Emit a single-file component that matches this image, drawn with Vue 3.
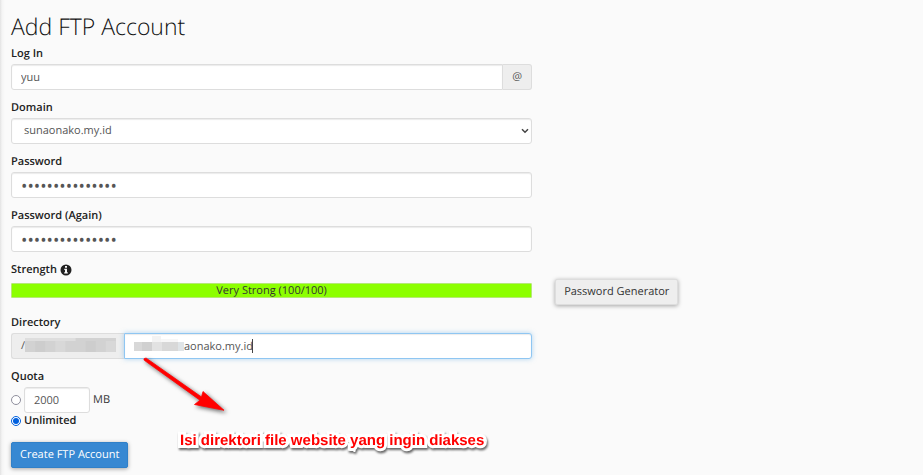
<script setup>
import { ref } from 'vue'

const login = ref('yuu')
const domain = ref('sunaonako.my.id')
const password = ref('passwordsecret1')
const passwordAgain = ref('passwordsecret1')
const directory = ref('aonako.my.id')
const quota = ref('2000')
const quotaType = ref('unlimited')
</script>

<template>
  <main class="page">
    <h1>Add FTP Account</h1>
    <form class="form" @submit.prevent>
      <div class="field">
        <label for="login">Log In</label>
        <div class="group">
          <input id="login" v-model="login" class="control joined-left" type="text" />
          <span class="addon addon-right">@</span>
        </div>
      </div>

      <div class="field">
        <label for="domain">Domain</label>
        <div class="select-wrap">
          <select id="domain" v-model="domain" class="control select">
            <option>sunaonako.my.id</option>
          </select>
          <svg class="chevron" viewBox="0 0 8 6" aria-hidden="true">
            <path d="M1 1.2 4 4.2 7 1.2" fill="none" stroke="#444" stroke-width="1.5" />
          </svg>
        </div>
      </div>

      <div class="field">
        <label for="password">Password</label>
        <input id="password" v-model="password" class="control secret" type="password" />
      </div>

      <div class="field">
        <label for="password-again">Password (Again)</label>
        <input id="password-again" v-model="passwordAgain" class="control secret" type="password" />
      </div>

      <div class="field strength">
        <div class="caption">
          Strength
          <svg class="info" viewBox="0 0 12 12" aria-hidden="true">
            <circle cx="6" cy="6" r="5.5" fill="#222" />
            <path d="M5 2h2v1.7H5zM4.3 4.7H7v3.6h.8v1.2H4.2V8.3H5V5.9h-.7z" fill="#fafafa" />
          </svg>
        </div>
        <div class="meter">Very Strong (100/100)</div>
      </div>
      <button class="btn btn-default" type="button">Password Generator</button>

      <div class="field">
        <label for="directory">Directory</label>
        <div class="group">
          <span class="addon addon-left">/<svg class="mask-prefix" viewBox="0 0 90 15" preserveAspectRatio="none" aria-hidden="true">
            <rect y="1" width="90" height="14" fill="#d2d2d2" />
            <path d="M0 1h50v3H0z" fill="#dedede" />
            <path d="M10 4h10v11H10zM60 4h10v11H60z" fill="#cdcdcd" />
            <path d="M30 4h10v11H30zM80 4h10v11H80z" fill="#d8d8d8" />
          </svg></span>
          <div class="directory">
            <input id="directory" v-model="directory" class="control joined-right focused" type="text" />
            <svg class="mask-name" viewBox="0 0 50 16" preserveAspectRatio="none" aria-hidden="true">
              <path d="M0 6h50v9H0z" fill="#d8d8d8" />
              <path d="M8 6h10v9H8z" fill="#d0d0d0" />
              <path d="M18 6h10v9H18z" fill="#e2e2e2" />
              <path d="M44 6h6v9h-6z" fill="#dfe4e7" />
              <path d="M18 0h9v6h-9z" fill="#f3f3f3" />
              <path d="M27 3h17v3H27z" fill="#f7f7f7" />
            </svg>
            <span class="caret"></span>
            <svg class="arrow" viewBox="0 0 90 66" aria-hidden="true">
              <path d="M6.3 3.2 61.5 42 63 36.5 84 55.3 54.5 49.5 60 45.2 4.3 5.3Q3 3 6.3 3.2Z" fill="#f00" stroke="#f00" stroke-width=".8" />
            </svg>
            <p class="note">Isi direktori file website yang ingin diakses</p>
          </div>
        </div>
      </div>

      <fieldset class="quota">
        <legend>Quota</legend>
        <div class="choice">
          <input v-model="quotaType" class="radio" type="radio" name="quota" value="limited" aria-label="Limited quota" />
          <input v-model="quota" class="control amount" type="text" aria-label="Quota in MB" />
          <span>MB</span>
        </div>
        <label class="choice unlimited">
          <input v-model="quotaType" class="radio" type="radio" name="quota" value="unlimited" />
          Unlimited
        </label>
      </fieldset>

      <button class="btn btn-primary" type="submit">Create FTP Account</button>
    </form>
  </main>
</template>

<style>
body {
  margin: 0;
  background: #fafafa;
}
</style>

<style scoped>
* {
  box-sizing: border-box;
}

.page {
  min-height: 100vh;
  padding: 11px 0 7px 11px;
  overflow: hidden;
  background: linear-gradient(90deg, #e2e2e2 0, #f4f4f4 2px, #fafafa 5px);
  color: #333;
  font: 11px/16px "Open Sans", sans-serif;
  text-rendering: geometricPrecision;
}

h1 {
  margin: 0 0 6px;
  color: #111;
  font-size: 23px;
  line-height: 30px;
  font-weight: 300;
}

.form {
  display: grid;
  grid-template-columns: 17fr 12fr;
  column-gap: 23px;
}

.field,
.quota {
  grid-column: 1;
  min-width: 0;
  margin: 0 0 11px;
}

.field > label,
.caption,
legend {
  display: block;
  height: 17px;
  padding: 0;
  color: #222;
  font-weight: 600;
  line-height: 14px;
}

.control {
  display: block;
  width: 100%;
  height: 26px;
  min-width: 0;
  margin: 0;
  padding: 0 9px;
  border: 1px solid #ddd;
  border-radius: 3px;
  outline: none;
  background: #fff;
  box-shadow: inset 0 1px 1px rgba(0, 0, 0, 0.08);
  color: #555;
  font: inherit;
  text-rendering: inherit;
}

.secret {
  font-size: 17px;
}

.group {
  display: flex;
}

.joined-left {
  flex: 1;
  border-radius: 3px 0 0 3px;
}

.joined-right {
  border-radius: 0 3px 3px 0;
}

.addon {
  display: flex;
  align-items: center;
  height: 26px;
  padding: 0 9px;
  border: 1px solid #ddd;
  background: #eee;
  color: #555;
}

.addon-right {
  border-left: 0;
  border-radius: 0 3px 3px 0;
}

.addon-left {
  width: 113px;
  padding-right: 8px;
  border-right: 0;
  border-radius: 3px 0 0 3px;
}

.mask-prefix {
  flex: 1;
  min-width: 0;
  height: 15px;
  margin-bottom: 4px;
}

.select-wrap {
  position: relative;
}

.select {
  padding: 0 24px 0 12px;
  appearance: none;
}

.chevron {
  position: absolute;
  top: 10px;
  right: 3px;
  width: 8px;
  height: 6px;
}

.caption {
  display: flex;
  align-items: center;
  gap: 3px;
  height: 14px;
  margin-bottom: 6px;
}

.info {
  width: 12px;
  height: 12px;
}

.strength {
  margin-bottom: 18px;
}

.meter {
  height: 15px;
  border: 1px solid #b5e876;
  border-radius: 1px;
  background: #8cff00;
  line-height: 14px;
  text-align: center;
}

.btn {
  justify-self: start;
  height: 26px;
  padding: 0 8px;
  border: 1px solid #ddd;
  border-radius: 2px;
  box-shadow: 0 1px 4px rgba(0, 0, 0, 0.35);
  font: inherit;
  text-rendering: inherit;
}

.btn-default {
  grid-column: 2;
  margin-top: 16px;
  background: #eee;
  color: #333;
}

.btn-primary {
  grid-column: 1;
  margin-top: 2px;
  border-color: #3080c8;
  background: #3788d2;
  color: #fff;
}

.directory {
  position: relative;
  flex: 1;
}

.focused {
  padding-left: 59px;
  border-color: #8fc6f2;
  box-shadow: inset 0 1px 1px rgba(0, 0, 0, 0.08), 0 0 5px rgba(102, 175, 233, 0.5);
}

.mask-name {
  position: absolute;
  top: 3px;
  left: 10px;
  width: 50px;
  height: 16px;
}

.caret {
  position: absolute;
  top: 6px;
  left: 128px;
  width: 1px;
  height: 14px;
  background: #444;
}

.arrow {
  position: absolute;
  top: 22px;
  left: 16px;
  width: 90px;
  height: 66px;
  overflow: visible;
  filter: drop-shadow(2px 2px 2px rgba(0, 0, 0, 0.6));
}

.note {
  position: absolute;
  top: 99px;
  left: 56px;
  margin: 0;
  color: #f00;
  font: bold 15px/18px "Liberation Sans", sans-serif;
  white-space: nowrap;
  -webkit-text-stroke: 6px #fff;
  paint-order: stroke fill;
  stroke-linejoin: round;
  filter: drop-shadow(1px 2px 1px rgba(0, 0, 0, 0.6));
}

.quota {
  padding: 0;
  border: 0;
}

.choice {
  display: flex;
  align-items: center;
  gap: 3px;
}

.radio {
  flex: none;
  display: grid;
  place-items: center;
  width: 10px;
  height: 10px;
  margin: 0;
  border: 1px solid #8f8f9d;
  border-radius: 50%;
  background: #fff;
  appearance: none;
}

.radio:checked {
  border: 1px solid #0060df;
}

.radio:checked::before {
  width: 6px;
  height: 6px;
  border-radius: 50%;
  background: #0060df;
  content: "";
}

.amount {
  width: 66px;
}

.unlimited {
  width: max-content;
  color: #222;
  font-weight: 600;
}
</style>
